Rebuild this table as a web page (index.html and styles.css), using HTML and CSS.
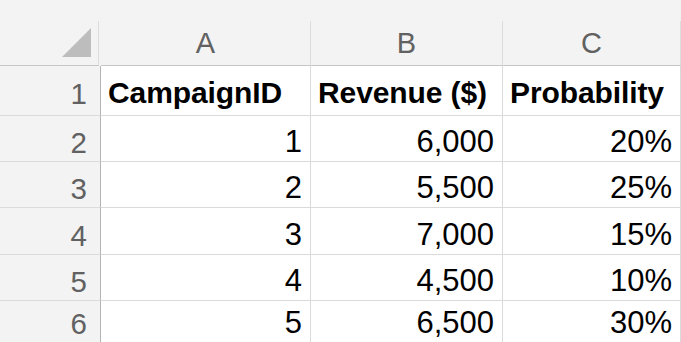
FILE: index.html
```html
<!DOCTYPE html>
<html>
<head>
<meta charset="utf-8">
<link rel="stylesheet" href="styles.css">
</head>
<body>
<div class="sheet">
  <div class="topstrip"></div>
  <div class="grid">
    <div class="corner"><span class="tri"></span></div>
    <div class="colhead">A</div>
    <div class="colhead">B</div>
    <div class="colhead">C</div>

    <div class="rowhead r1">1</div>
    <div class="cell hdr">CampaignID</div>
    <div class="cell hdr">Revenue ($)</div>
    <div class="cell hdr">Probability</div>

    <div class="rowhead">2</div>
    <div class="cell num">1</div>
    <div class="cell num">6,000</div>
    <div class="cell num">20%</div>

    <div class="rowhead">3</div>
    <div class="cell num">2</div>
    <div class="cell num">5,500</div>
    <div class="cell num">25%</div>

    <div class="rowhead">4</div>
    <div class="cell num">3</div>
    <div class="cell num">7,000</div>
    <div class="cell num">15%</div>

    <div class="rowhead">5</div>
    <div class="cell num">4</div>
    <div class="cell num">4,500</div>
    <div class="cell num">10%</div>

    <div class="rowhead">6</div>
    <div class="cell num">5</div>
    <div class="cell num">6,500</div>
    <div class="cell num">30%</div>
  </div>
</div>
</body>
</html>
```

FILE: styles.css
```css
* { box-sizing: border-box; }
html, body {
  margin: 0;
  padding: 0;
  background: #f3f3f3;
  overflow: hidden;
  width: 681px;
  height: 342px;
}
body {
  font-family: "Liberation Sans", Arial, sans-serif;
}
.sheet {
  width: 681px;
  overflow: hidden;
}
.topstrip {
  height: 21px;
  background: #f3f3f3;
}
.grid {
  display: grid;
  grid-template-columns: 101px 210px 192px 178px;
  grid-template-rows: 45px 50px 46px 46px 47px 46px 42px;
  background: #f3f3f3;
}
.corner {
  position: relative;
  margin-right: 2px;
  border-right: 1px solid #dcdcdc;
  border-bottom: 1px solid #c6c6c6;
  background: #f3f3f3;
}
.corner .tri {
  position: absolute;
  left: 62px;
  top: 7px;
  width: 0;
  height: 0;
  border-style: solid;
  border-width: 0 0 29px 29px;
  border-color: transparent transparent #bdbdbd transparent;
}
.colhead {
  display: flex;
  align-items: center;
  justify-content: center;
  font-size: 29px;
  color: #616161;
  background: #f3f3f3;
  border-right: 1px solid #dcdcdc;
  border-bottom: 1px solid #c6c6c6;
  padding-top: 1px;
}
.rowhead {
  display: flex;
  align-items: flex-end;
  justify-content: flex-end;
  padding-right: 13px;
  padding-bottom: 4px;
  font-size: 29.5px;
  line-height: 1;
  color: #616161;
  background: #f3f3f3;
  border-right: 1px solid #b4b4b4;
  border-bottom: 1px solid #dcdcdc;
}
.rowhead.r1 {
  padding-bottom: 7px;
}
.cell {
  display: flex;
  align-items: flex-end;
  background: #ffffff;
  border-right: 1px solid #dadada;
  border-bottom: 1px solid #dadada;
  line-height: 1;
  color: #000;
}
.cell.hdr {
  font-weight: bold;
  font-size: 30px;
  letter-spacing: -0.1px;
  padding-left: 7px;
  padding-bottom: 7px;
}
.cell.num {
  justify-content: flex-end;
  font-size: 31px;
  padding-right: 8px;
  padding-bottom: 4px;
}
```
